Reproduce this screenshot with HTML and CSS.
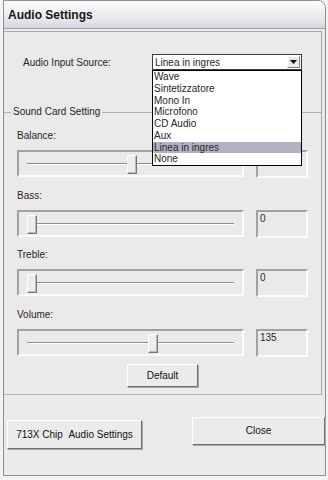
FILE: index.html
```html
<!DOCTYPE html>
<html lang="it">
<head>
  <meta charset="UTF-8">
  <title>Audio Settings</title>
  <link rel="stylesheet" href="styles.css">
</head>
<body>
  <div class="window">
    <div class="titlebar">Audio Settings</div>

    <div class="panel">
      <div class="source-row">
        <span class="source-label">Audio Input Source:</span>
        <div class="combo">
          <div class="combo-box">
            <span class="combo-text">Linea in ingres</span>
            <span class="combo-arrow"><svg width="7" height="4" viewBox="0 0 7 4"><path d="M0 0h7L3.5 4z" fill="#000"/></svg></span>
          </div>
          <ul class="combo-list">
            <li>Wave</li>
            <li>Sintetizzatore</li>
            <li>Mono In</li>
            <li>Microfono</li>
            <li>CD Audio</li>
            <li>Aux</li>
            <li class="selected">Linea in ingres</li>
            <li>None</li>
          </ul>
        </div>
      </div>

      <fieldset class="group">
        <legend>Sound Card Setting</legend>

        <div class="field-label first">Balance:</div>
        <div class="slider-row">
          <div class="slider"><div class="groove"></div><div class="thumb" style="left:108px"></div></div>
          <div class="value"></div>
        </div>

        <div class="field-label">Bass:</div>
        <div class="slider-row">
          <div class="slider"><div class="groove"></div><div class="thumb" style="left:8px"></div></div>
          <div class="value">0</div>
        </div>

        <div class="field-label">Treble:</div>
        <div class="slider-row">
          <div class="slider"><div class="groove"></div><div class="thumb" style="left:8px"></div></div>
          <div class="value">0</div>
        </div>

        <div class="field-label">Volume:</div>
        <div class="slider-row">
          <div class="slider"><div class="groove"></div><div class="thumb" style="left:129px"></div></div>
          <div class="value">135</div>
        </div>

        <div class="default-row"><button class="btn btn-default">Default</button></div>
      </fieldset>
    </div>

    <div class="footer">
      <button class="btn btn-chip">713X Chip &nbsp;Audio Settings</button>
      <button class="btn btn-close">Close</button>
    </div>
  </div>
</body>
</html>
```

FILE: styles.css
```css
body { margin: 0; padding: 0 0 0 3px; width: 325px; height: 480px; background: #f3f3f3; font-family: "Liberation Sans", Arial, sans-serif; font-size: 10px; color: #262626; overflow: hidden; }
.window { width: 321px; height: 474px; border: 1px solid #8e8e92; border-top-right-radius: 8px; background: #ebe9e9; }
.titlebar { height: 27px; line-height: 28px; padding-left: 4px; font-size: 12px; font-weight: bold; color: #161616; background: linear-gradient(#fdfdfd, #ececf0 55%, #d6d6e2); border-bottom: 1px solid #9d9da8; border-top-right-radius: 7px; }

.panel { margin: 2px 3px 0 0; border-top: 1px solid #a8a8a8; border-right: 1px solid #a8a8a8; }
.source-row { display: flex; align-items: center; padding: 22px 0 0 19px; }
.source-label { width: 129px; }
.combo { position: relative; width: 150px; }
.combo-box { display: flex; align-items: center; height: 14px; border: 1px solid #3c3c3c; background: #fff; }
.combo-text { flex: 1; padding-left: 2px; }
.combo-arrow { display: flex; align-items: center; justify-content: center; width: 13px; height: 12px; margin-right: 1px; background: #ecebeb; border: 1px solid; border-color: #fff #7c7c7c #7c7c7c #fff; box-sizing: border-box; }
.combo-list { position: absolute; left: 0; top: 16px; width: 148px; margin: 0; padding: 0; list-style: none; border: 1px solid #000; background: #fff; z-index: 2; }
.combo-list li { height: 11.75px; line-height: 11.75px; padding-left: 1px; }
.combo-list li.selected { background: #b2b1c4; }

.group { margin: 36px 0 0; padding: 0 0 7px 13px; border: 1px solid #b2b2b2; border-left: none; border-right: none; }
.group legend { margin-left: -6px; padding: 0 2px; line-height: 12px; }
.field-label { margin-top: 11.5px; line-height: 12px; }
.field-label.first { margin-top: 12px; }
.slider-row { display: flex; gap: 12px; margin-top: 8px; }
.slider { position: relative; width: 223px; height: 23px; border: 2px solid; border-color: #a2a2a2 #fbfbfb #fbfbfb #a2a2a2; }
.groove { margin: 11px 8px 0; border-top: 1px solid #8c8c8c; border-bottom: 1px solid #fff; }
.thumb { position: absolute; top: 3px; width: 8px; height: 17px; background: #eeeded; border: 1px solid; border-color: #fff #777 #777 #fff; box-shadow: inset -1px -1px 0 #b8b8b8; }
.value { width: 46px; height: 23px; padding: 1px 0 0 2px; border: 2px solid; border-color: #a2a2a2 #fbfbfb #fbfbfb #a2a2a2; }

.default-row { display: flex; justify-content: center; margin-top: 7px; padding-right: 13px; }
.btn { font-family: "Liberation Sans", Arial, sans-serif; font-size: 10px; color: #111; background: #ecebeb; border: 1px solid; border-color: #fff #6e6e6e #6e6e6e #fff; box-shadow: 1px 1px 0 #a8a8a8; padding: 0; }
.btn-default { width: 71px; height: 23px; }
.footer { display: flex; justify-content: space-between; align-items: flex-start; padding: 22px 0 0 3px; }
.btn-chip { width: 135px; height: 29px; margin-top: 3px; }
.btn-close { width: 133px; height: 28px; }
```
